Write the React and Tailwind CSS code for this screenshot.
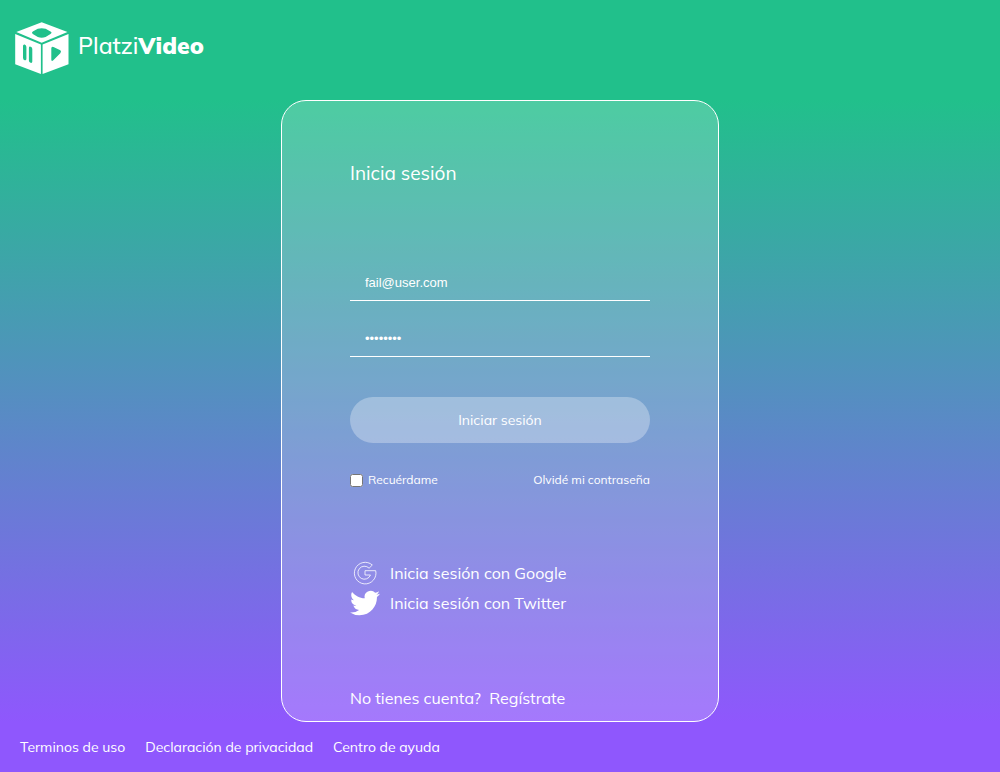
import React from 'react';

function Logo() {
  return (
    <a href="#inicio" aria-label="Platzi Video" className="flex items-center text-white">
      <svg viewBox="0 0 56 54" className="h-[54px] w-14" fill="currentColor" aria-hidden="true">
        <path fillRule="evenodd" d="M27.700 1.200 L53.500 11 L27.700 21.700 L2.300 11 Z M18.800 10.500 Q17 11.700 18.800 12.900 L23.800 15.900 Q27.700 17.400 31.600 15.900 L36.500 12.900 Q38.500 11.700 36.500 10.500 L31.600 7.800 Q27.700 6.500 23.800 7.800 Z" />
        <path fillRule="evenodd" d="M1.200 13 L26.900 23.400 V53 L1.200 43.300 Z M9 25 V36.800 Q9 38.800 10.700 39.300 Q12.400 39.600 12.400 37.800 V26 Q12.400 24 10.700 23.500 Q9 23.200 9 25 Z M14.900 27 V39.500 Q14.900 41.300 16.600 41.800 Q18.300 42.200 18.300 40.500 V28 Q18.300 26.200 16.600 25.700 Q14.900 25.300 14.900 27 Z" />
        <path fillRule="evenodd" d="M28.600 23.400 L54.500 13 V43.300 L28.600 53 Z M37.300 27.500 V38.500 Q37.300 40.800 39.300 39.300 L46.300 32.300 Q47.800 30.500 46.300 29.300 L39.500 26 Q37.300 25.200 37.300 27.500 Z" />
      </svg>
      <span className="ml-2 pb-1 text-[23px] leading-6 font-medium">
        Platzi<b className="font-black">Video</b>
      </span>
    </a>
  );
}

function GoogleIcon() {
  return (
    <svg viewBox="0 0 30 30" className="size-[30px]" fill="none" stroke="currentColor" strokeWidth="0.8" strokeLinejoin="round" aria-hidden="true">
      <path d="M15 12.700 H25.700 A10.800 10.800 0 1 1 22.300 7 L19.100 10.200 A6.500 6.500 0 1 0 20.500 17 H15 Z" />
    </svg>
  );
}

function TwitterIcon() {
  return (
    <svg viewBox="0 0 24 24" className="size-[30px]" fill="currentColor" aria-hidden="true">
      <path d="M23.953 4.570a10 10 0 01-2.825.775 4.958 4.958 0 002.163-2.723c-.951.555-2.005.959-3.127 1.184a4.920 4.920 0 00-8.384 4.482C7.690 8.095 4.067 6.130 1.640 3.162a4.822 4.822 0 00-.666 2.475c0 1.710.870 3.213 2.188 4.096a4.904 4.904 0 01-2.228-.616v.060a4.923 4.923 0 003.946 4.827 4.996 4.996 0 01-2.212.085 4.936 4.936 0 004.604 3.417 9.867 9.867 0 01-6.102 2.105c-.390 0-.779-.023-1.170-.067a13.995 13.995 0 007.557 2.209c9.053 0 13.998-7.496 13.998-13.985 0-.210 0-.420-.015-.630A9.935 9.935 0 0024 4.590z" />
    </svg>
  );
}

const fieldClass =
  'h-9 w-full border-b border-white bg-transparent px-[15px] font-["Liberation_Sans",sans-serif] text-[13px] text-white outline-none';

export default function App() {
  return (
    <div className="flex min-h-screen flex-col bg-[#8f57fd] font-[Mulish,Muli,'Noto_Sans',sans-serif] text-white">
      <header className="flex h-[100px] items-start bg-[#21c08b] px-[14px] pt-[21px]">
        <Logo />
      </header>

      <main className="flex flex-1 justify-center bg-linear-to-b/srgb from-[#21c08b] to-[#8f57fd] px-5">
        <section className="flex w-[438px] flex-col rounded-[25px] border border-white bg-white/20 px-[68px] pt-[60px] pb-[10px]">
          <h1 className="text-[19px] leading-6">Inicia sesión</h1>
          <form className="mt-20 flex flex-col" onSubmit={(e) => e.preventDefault()}>
            <input type="email" aria-label="Correo" defaultValue="fail@user.com" className={fieldClass} />
            <input type="password" aria-label="Contraseña" defaultValue="password" className={`mt-5 ${fieldClass}`} />
            <button type="submit" className="mt-10 h-[46px] rounded-full bg-white/30 text-sm">
              Iniciar sesión
            </button>
            <div className="mt-7 flex items-center justify-between text-xs leading-[18px]">
              <label className="flex items-center gap-[5px]">
                <input type="checkbox" className="size-[13px]" />
                Recuérdame
              </label>
              <a href="#recuperar">Olvidé mi contraseña</a>
            </div>
          </form>
          <div className="mt-[69px] flex flex-col">
            <a href="#google" className="flex items-center gap-[10px]">
              <GoogleIcon />
              Inicia sesión con Google
            </a>
            <a href="#twitter" className="flex items-center gap-[10px]">
              <TwitterIcon />
              Inicia sesión con Twitter
            </a>
          </div>
          <p className="mt-[68px]">
            No tienes cuenta? <a href="#registro" className="ml-1">Regístrate</a>
          </p>
        </section>
      </main>

      <footer className="flex h-[50px] items-center gap-5 bg-[#8f57fd] px-5 text-sm">
        <a href="#terminos">Terminos de uso</a>
        <a href="#privacidad">Declaración de privacidad</a>
        <a href="#ayuda">Centro de ayuda</a>
      </footer>
    </div>
  );
}
